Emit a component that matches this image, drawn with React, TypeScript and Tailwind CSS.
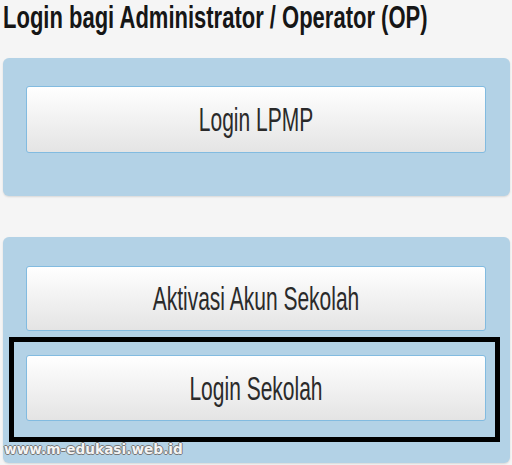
export default function App() {
  const btn =
    "flex items-center justify-center overflow-hidden rounded-[3px] border border-[#82bbe0] bg-gradient-to-b from-[#ffffff] to-[#e4e4e4] text-[#2a2a2a] shadow-[inset_0_1px_0_rgba(255,255,255,0.9)]";
  const label = "inline-block whitespace-nowrap text-[21px] leading-none scale-y-[1.57]";

  return (
    <div
      className="relative h-[465px] w-[512px] overflow-hidden bg-[#f5f5f5]"
      style={{ fontFamily: '"Liberation Sans", Arial, sans-serif' }}
    >
      <h1 className="h-[33px] pl-[3px] text-[22px] font-bold leading-[1.12] text-[#161616]">
        <span className="inline-block origin-top whitespace-nowrap scale-y-[1.45]">
          Login bagi Administrator / Operator (OP)
        </span>
      </h1>

      <div className="ml-[3px] mt-[25px] w-[507px] rounded-[6px] bg-[#b3d2e6] pb-[43px] pt-[28px] shadow-[0_1px_2px_rgba(0,0,0,0.12)]">
        <div className={`${btn} ml-[23px] h-[67px] w-[460px]`}>
          <span className={label}>Login LPMP</span>
        </div>
      </div>

      <div className="ml-[3px] mt-[41px] w-[507px] rounded-[6px] bg-[#b3d2e6] pb-[21px] pt-[29px] shadow-[0_1px_2px_rgba(0,0,0,0.12)]">
        <div className={`${btn} ml-[23px] h-[65px] w-[460px]`}>
          <span className={label}>Aktivasi Akun Sekolah</span>
        </div>
        <div className="ml-[6px] mt-[6px] w-[491px] border-[5px] border-black pb-[16px] pl-[12px] pt-[13px]">
          <div className={`${btn} h-[66px] w-[460px]`}>
            <span className={label}>Login Sekolah</span>
          </div>
        </div>
      </div>

      <div
        className="absolute left-[4px] top-[443px] whitespace-nowrap text-[13.7px] font-bold leading-none text-[#f4f4f4] [text-shadow:1px_0_0_#777,-1px_0_0_#777,0_1px_0_#777,0_-1px_0_#777]"
        style={{ fontFamily: '"DejaVu Sans", Verdana, sans-serif' }}
      >
        www.m-edukasi.web.id
      </div>
    </div>
  );
}
